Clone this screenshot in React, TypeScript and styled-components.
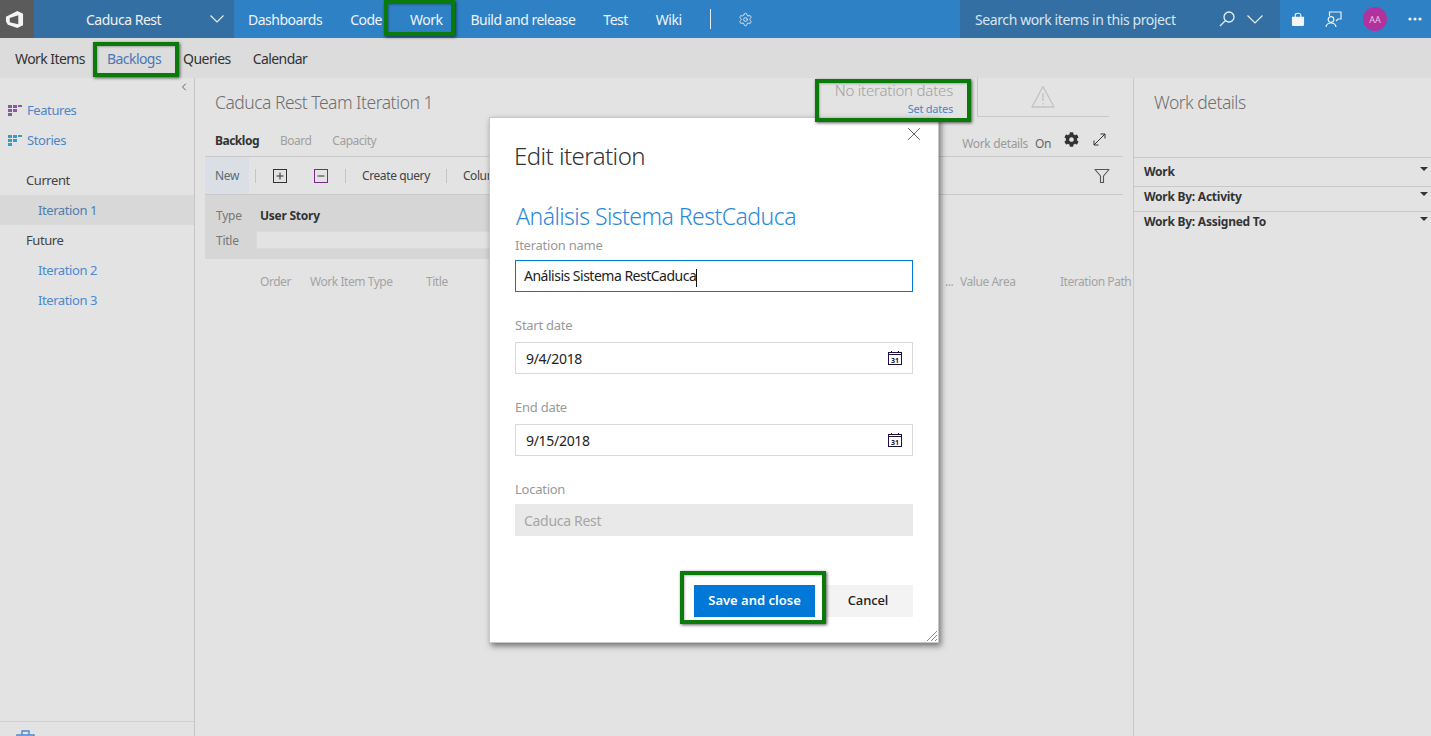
import React from "react";
import styled, { createGlobalStyle } from "styled-components";
import { ChevronLeft, Settings, X } from "lucide-react";
import { FaCog } from "react-icons/fa";

const GlobalStyle = createGlobalStyle`
  html, body {
    margin: 0;
    padding: 0;
    height: 100%;
    overflow: hidden;
    background: #e3e3e3;
    font-family: "Noto Sans", "Open Sans", Arial, sans-serif;
    font-size: 13px;
    letter-spacing: -0.25px;
  }
  * {
    box-sizing: border-box;
  }
`;

const Page = styled.div`
  position: relative;
  width: 1431px;
  height: 736px;
  overflow: hidden;
  display: flex;
  flex-direction: column;
`;

const Marker = styled.div<{ $inset: string }>`
  position: absolute;
  inset: ${(p) => p.$inset};
  border: 4px solid #0a7a0a;
  box-shadow: 1px 1px 3px rgba(0, 0, 0, 0.65), inset 1px 1px 2px rgba(0, 0, 0, 0.25);
  pointer-events: none;
  z-index: 5;
`;

const TopBar = styled.header`
  height: 38px;
  flex: none;
  display: flex;
  align-items: stretch;
  background: #2f81c5;
  color: #fff;
`;

const LogoBox = styled.div`
  width: 34px;
  padding-right: 5px;
  background: #5b5b5b;
  display: flex;
  align-items: center;
  justify-content: center;
`;

const ProjectBox = styled.div`
  width: 200px;
  background: #336fa3;
  display: flex;
  align-items: center;
  justify-content: space-between;
  padding: 0 10px 0 52px;
  font-size: 14px;
  letter-spacing: -0.5px;
  color: #f0f0f0;
`;

const TopNav = styled.nav`
  display: flex;
  align-items: center;
`;

const TopLink = styled.a`
  position: relative;
  height: 100%;
  display: flex;
  align-items: center;
  padding: 0 14px;
  font-size: 14px;
  letter-spacing: -0.5px;
  color: #eef4fa;
`;

const NavDivider = styled.span`
  width: 1px;
  height: 20px;
  background: #e6eff7;
  margin-left: 14px;
`;

const GearSlot = styled.span`
  display: flex;
  margin-left: 27px;
  color: #e6eff7;
`;

const SearchBox = styled.div`
  margin-left: auto;
  width: 320px;
  background: #336fa3;
  display: flex;
  align-items: center;
  padding: 0 17px 0 15px;
  font-size: 14px;
  letter-spacing: -0.4px;
  color: #d9e5ef;
`;

const SearchText = styled.span`
  flex: 1;
`;

const SearchIcons = styled.span`
  display: flex;
  align-items: center;
  gap: 12px;
`;

const TopActions = styled.div`
  width: 151px;
  display: flex;
  align-items: center;
  padding-left: 11px;
  position: relative;
`;

const ActionSlot = styled.span<{ $width: number; $left?: number }>`
  display: flex;
  justify-content: center;
  align-items: center;
  width: ${(p) => p.$width}px;
  margin-left: ${(p) => p.$left ?? 0}px;
`;

const Avatar = styled.span`
  width: 24px;
  height: 24px;
  border-radius: 50%;
  background: #b1329f;
  color: #e8c4e2;
  font-size: 9px;
  display: flex;
  align-items: center;
  justify-content: center;
  letter-spacing: 0;
`;

const SubBar = styled.div`
  height: 40px;
  flex: none;
  display: flex;
  align-items: stretch;
  padding-left: 4px;
  background: #dcdcdc;
`;

const SubLink = styled.a<{ $active?: boolean }>`
  position: relative;
  display: flex;
  align-items: center;
  padding: 1px 11px 0;
  font-size: 14px;
  letter-spacing: -0.56px;
  color: ${(p) => (p.$active ? "#4a78b5" : "#333")};
`;

const Body = styled.div`
  flex: 1;
  display: flex;
  min-height: 0;
`;

const Sidebar = styled.aside`
  position: relative;
  width: 195px;
  flex: none;
  border-right: 1px solid #c6c6c6;
  display: flex;
  flex-direction: column;
  padding-top: 17px;
`;

const CollapseSlot = styled.span`
  position: absolute;
  top: 3px;
  right: 4px;
  display: flex;
  color: #666;
`;

const SideRow = styled.div<{ $indent: number; $color: string; $selected?: boolean }>`
  height: 30px;
  flex: none;
  display: flex;
  align-items: center;
  gap: 4px;
  padding-left: ${(p) => p.$indent}px;
  color: ${(p) => p.$color};
  font-size: 13px;
  letter-spacing: -0.42px;
  background: ${(p) => (p.$selected ? "#d8d8d8" : "transparent")};
`;

const SideGap = styled.div`
  height: 10px;
  flex: none;
`;

const SideFooter = styled.div`
  margin-top: auto;
  height: 15px;
  border-top: 1px solid #d0d0d0;
  padding: 8px 0 0 16px;
  overflow: hidden;
  color: #4a8ad0;
`;

const Main = styled.main`
  width: 938px;
  flex: none;
  padding-left: 10px;
  display: flex;
  flex-direction: column;
  overflow: hidden;
`;

const TitleRow = styled.div`
  height: 39px;
  flex: none;
  display: flex;
  align-items: flex-start;
  padding: 0 24px 0 10px;
`;

const IterationTitle = styled.h1`
  flex: 1;
  margin: 12px 0 0;
  font-size: 17.5px;
  line-height: 24px;
  font-weight: 300;
  letter-spacing: -0.5px;
  color: #6f6f6f;
`;

const DatesBlock = styled.div`
  position: relative;
  display: flex;
  flex-direction: column;
  align-items: flex-end;
  padding: 2px 24px 0 0;
`;

const NoDates = styled.div`
  font-size: 15px;
  line-height: 20px;
  font-weight: 300;
  letter-spacing: -0.2px;
  color: #a2a2a2;
`;

const SetDates = styled.a`
  font-size: 11px;
  line-height: 17px;
  color: #4a86c8;
`;

const WarnBlock = styled.div`
  width: 132px;
  height: 39px;
  border-left: 1px solid #c9c9c9;
  border-bottom: 1px solid #c9c9c9;
  display: flex;
  justify-content: center;
  padding: 7px 2px 0 0;
`;

const TabRow = styled.div`
  height: 40px;
  flex: none;
  display: flex;
  align-items: center;
  margin-right: 10px;
  padding: 8px 17px 0 10px;
  border-bottom: 1px solid #c9c9c9;
`;

const Tab = styled.span<{ $active?: boolean }>`
  font-size: 12px;
  margin-right: 21px;
  letter-spacing: -0.5px;
  font-weight: ${(p) => (p.$active ? 700 : 400)};
  color: ${(p) => (p.$active ? "#333" : "#a0a0a0")};
`;

const WorkToggle = styled.div`
  margin-left: auto;
  display: flex;
  align-items: center;
  padding-top: 6px;
  font-size: 12px;
  letter-spacing: -0.35px;
  color: #9a9a9a;
`;

const ToggleValue = styled.span`
  margin-left: 7px;
  color: #666;
`;

const ToggleIcon = styled.span<{ $gap: number }>`
  display: flex;
  margin-left: ${(p) => p.$gap}px;
  margin-top: -9px;
  color: #333;
`;

const Toolbar = styled.div`
  height: 38px;
  flex: none;
  display: flex;
  align-items: stretch;
  margin-right: 10px;
  padding-right: 13px;
  border-bottom: 1px solid #c9c9c9;
  font-size: 12px;
  letter-spacing: -0.4px;
  color: #444;
`;

const NewButton = styled.span`
  width: 44px;
  background: #d9dfe4;
  color: #5f6a75;
  display: flex;
  align-items: center;
  justify-content: center;
`;

const ToolSep = styled.span<{ $left: number }>`
  align-self: center;
  width: 1px;
  height: 14px;
  background: #c4c4c4;
  margin-left: ${(p) => p.$left}px;
`;

const ToolItem = styled.span<{ $left: number }>`
  display: flex;
  align-items: center;
  margin-left: ${(p) => p.$left}px;
`;

const ClippedTool = styled(ToolItem)`
  width: 27px;
  overflow: hidden;
  white-space: nowrap;
`;

const FilterSlot = styled.span`
  display: flex;
  align-items: center;
  margin-left: auto;
`;

const QuickAdd = styled.div`
  height: 64px;
  width: 500px;
  flex: none;
  background: #d6d6d6;
  display: grid;
  grid-template-columns: 40px 1fr;
  grid-auto-rows: 18px;
  align-items: center;
  row-gap: 7px;
  padding: 11px 0 0 11px;
  font-size: 12px;
  color: #777;
`;

const QuickValue = styled.span`
  padding-left: 4px;
  font-weight: 700;
  color: #333;
`;

const QuickInput = styled.div`
  height: 18px;
  background: #e3e3e3;
  border: 1px solid #dadada;
`;

const ColumnHeader = styled.div`
  display: grid;
  grid-template-columns: 50px 116px 519px 15px 100px 80px;
  padding: 14px 0 0 55px;
  font-size: 12px;
  line-height: 18px;
  letter-spacing: -0.45px;
  white-space: nowrap;
  color: #a3a3a3;
`;

const DetailsPane = styled.aside`
  flex: 1;
  border-left: 1px solid #c9c9c9;
`;

const DetailsTitle = styled.h2`
  height: 79px;
  margin: 0;
  padding: 12px 0 0 20px;
  font-size: 17.5px;
  line-height: 24px;
  font-weight: 300;
  letter-spacing: -0.5px;
  color: #6f6f6f;
`;

const DetailsRow = styled.div<{ $height: number; $pad: number }>`
  height: ${(p) => p.$height}px;
  display: flex;
  align-items: flex-start;
  justify-content: space-between;
  padding: ${(p) => p.$pad}px 3px 0 10px;
  border-top: 1px solid #c9c9c9;
  font-size: 12px;
  line-height: 18px;
  font-weight: 700;
  color: #333;
`;

const Caret = styled.span`
  width: 0;
  height: 0;
  margin-top: 4px;
  border-left: 4px solid transparent;
  border-right: 4px solid transparent;
  border-top: 4px solid #333;
`;

const Dialog = styled.section`
  position: absolute;
  left: 489px;
  top: 117px;
  width: 450px;
  height: 526px;
  background: #fff;
  border: 1px solid #c8c8c8;
  box-shadow: 2px 3px 6px rgba(0, 0, 0, 0.5);
  padding: 0 25px;
  display: flex;
  flex-direction: column;
  z-index: 3;
`;

const CloseSlot = styled.span`
  position: absolute;
  top: 5px;
  right: 13px;
  display: flex;
  color: #444;
`;

const DialogTitle = styled.h2`
  margin: 21px 0 0 -1px;
  font-size: 24px;
  line-height: 34px;
  font-weight: 300;
  letter-spacing: -0.55px;
  color: #333;
`;

const IterationHeading = styled.h3`
  margin: 27px 0 0 1px;
  font-size: 23px;
  line-height: 32px;
  font-weight: 300;
  letter-spacing: -0.53px;
  color: #2b88d8;
`;

const FieldLabel = styled.label`
  display: block;
  font-size: 13px;
  line-height: 18px;
  color: #999;
`;

const Field = styled.div<{ $top: number }>`
  margin-top: ${(p) => p.$top}px;
`;

const InputBox = styled.div<{ $state?: "focus" | "disabled" }>`
  height: 32px;
  margin-top: ${(p) => (p.$state === undefined ? 8 : 6)}px;
  display: flex;
  align-items: center;
  justify-content: space-between;
  padding: ${(p) => (p.$state === "focus" ? "1px 8px 0" : p.$state === "disabled" ? "0 9px" : "0 10px")};
  font-size: 14px;
  letter-spacing: ${(p) => (p.$state === "focus" ? -0.5 : -0.3)}px;
  color: ${(p) => (p.$state === "disabled" ? "#a6a6a6" : "#222")};
  background: ${(p) => (p.$state === "disabled" ? "#e9e9e9" : "#fff")};
  border: ${(p) =>
    p.$state === "focus"
      ? "1px solid #0078d7"
      : p.$state === "disabled"
        ? "none"
        : "1px solid #d9d9d9"};
`;

const TextCaret = styled.span`
  display: inline-block;
  width: 1px;
  height: 18px;
  background: #111;
  vertical-align: middle;
`;

const DialogActions = styled.div`
  margin-top: 49px;
  display: flex;
  justify-content: flex-end;
  gap: 8px;
`;

const ActionButton = styled.button<{ $primary?: boolean }>`
  position: relative;
  height: 32px;
  width: ${(p) => (p.$primary ? 121 : 90)}px;
  border: none;
  padding: 0 0 2px;
  font-family: inherit;
  letter-spacing: ${(p) => (p.$primary ? 0 : -0.1)}px;
  font-size: 13px;
  font-weight: ${(p) => (p.$primary ? 600 : 500)};
  color: ${(p) => (p.$primary ? "#fff" : "#222")};
  background: ${(p) => (p.$primary ? "#0078d7" : "#f3f3f3")};
`;

const ResizeGrip = styled.svg`
  position: absolute;
  right: 0;
  bottom: 0;
`;

const LogoIcon = () => (
  <svg width="19" height="19" viewBox="0 0 20 20" fill="#f4f4f4" fillRule="evenodd">
    <path d="M1 7 L13 1 L19 4 V16 L13 19 L3 15.5 L1 12 Z M5 8.5 V13 L14 15 V5.5 Z" />
  </svg>
);

const Chevron = ({ width, color }: { width: number; color: string }) => (
  <svg width={width} height={width / 2 + 1} viewBox={`0 0 ${width} ${width / 2 + 1}`} fill="none" stroke={color} strokeWidth="1.2">
    <path d={`M0.5 0.5 L${width / 2} ${width / 2} L${width - 0.5} 0.5`} />
  </svg>
);

const SearchGlyph = () => (
  <svg width="16" height="16" viewBox="0 0 16 16" fill="none" stroke="#e8f0f6" strokeWidth="1.3">
    <circle cx="10" cy="6" r="5" />
    <path d="M6.4 9.6 L1 15" />
  </svg>
);

const BagIcon = () => (
  <svg width="15" height="15" viewBox="0 0 15 15" fill="#f4f4f4">
    <path d="M1 4.5 H14 V13 Q14 14.5 12.5 14.5 H2.5 Q1 14.5 1 13 Z" />
    <path d="M4.5 5 V3 Q4.5 .8 7.5 .8 T10.5 3 V5" fill="none" stroke="#f4f4f4" strokeWidth="1.2" />
  </svg>
);

const FeedbackIcon = () => (
  <svg width="17" height="17" viewBox="0 0 17 17" fill="none" stroke="#f0f0f0" strokeWidth="1.2">
    <path d="M4.5 5 V1 H16 V8 H13 L11 10" />
    <circle cx="6" cy="8.5" r="2.8" />
    <path d="M1 16 Q1.5 12 6 12 T11 16" />
  </svg>
);

const DotsIcon = () => (
  <svg width="14" height="4" viewBox="0 0 14 4" fill="#eef4fa">
    <circle cx="2" cy="2" r="1.6" />
    <circle cx="7" cy="2" r="1.6" />
    <circle cx="12" cy="2" r="1.6" />
  </svg>
);

const BacklogIcon = ({ color }: { color: string }) => (
  <svg width="15" height="11" viewBox="0 0 15 11" fill={color}>
    <rect x="0" y="0" width="4" height="3" />
    <rect x="5" y="0" width="4" height="3" />
    <rect x="10" y="0" width="4" height="2" />
    <rect x="0" y="4" width="4" height="3" />
    <rect x="5" y="4" width="4" height="3" />
    <rect x="0" y="8" width="4" height="3" />
  </svg>
);

const WarningIcon = () => (
  <svg width="24" height="23" viewBox="0 0 24 23" fill="none" stroke="#c4c4c4" strokeWidth="1.4">
    <path d="M12 1.5 L23 22 H1 Z" strokeLinejoin="round" />
    <path d="M12 8 V16 M12 18 V19.5" />
  </svg>
);

const ExpandIcon = () => (
  <svg width="13" height="13" viewBox="0 0 13 13" fill="none" stroke="#333" strokeWidth="1">
    <path d="M1 12 L12 1 M7.5 1 H12 V5.5 M1 7.5 V12 H5.5" />
  </svg>
);

const FunnelIcon = () => (
  <svg width="16" height="16" viewBox="0 0 16 16" fill="none" stroke="#555" strokeWidth="1.1">
    <path d="M1 1.5 H15 L9.5 8 V14.5 H6.5 V8 Z" strokeLinejoin="round" />
  </svg>
);

const BoxIcon = ({ color, plus }: { color: string; plus?: boolean }) => (
  <svg width="14" height="14" viewBox="0 0 14 14" fill="none" stroke={color}>
    <rect x="0.5" y="0.5" width="13" height="13" />
    <path d="M3.5 7 H10.5" stroke="#333" />
    {plus && <path d="M7 3.5 V10.5" stroke="#333" />}
  </svg>
);

const CalendarIcon = () => (
  <svg width="14" height="14" viewBox="0 0 14 14" fill="none" stroke="#1c1040">
    <rect x="0.5" y="1.5" width="13" height="12" />
    <path d="M0.5 3.5 H13.5 M3.5 0 V2 M10.5 0 V2" />
    <text x="7" y="11.5" textAnchor="middle" fontSize="7" fontWeight="700" fill="#1c1040" stroke="none" letterSpacing="0">
      31
    </text>
  </svg>
);

const ToolboxIcon = () => (
  <svg width="19" height="16" viewBox="0 0 19 16" fill="none" stroke="currentColor" strokeWidth="1.4">
    <path d="M1 5 H18 V15 H1 Z M6 5 V1 H13 V5" />
  </svg>
);

const GripIcon = () => (
  <ResizeGrip width="12" height="12" viewBox="0 0 12 12" stroke="#8a8a8a">
    <path d="M1 11 L11 1 M5 11 L11 5 M9 11 L11 9" />
  </ResizeGrip>
);

const topLinks = ["Dashboards", "Code", "Work", "Build and release", "Test", "Wiki"];
const subLinks = ["Work Items", "Backlogs", "Queries", "Calendar"];
const columns = ["Order", "Work Item Type", "Title", "...", "Value Area", "Iteration Path"];
const details = [
  { label: "Work", height: 29, pad: 5 },
  { label: "Work By: Activity", height: 25, pad: 1 },
  { label: "Work By: Assigned To", height: 25, pad: 1 },
];

const App: React.FunctionComponent = () => {
  return (
    <Page>
      <GlobalStyle />
      <TopBar>
        <LogoBox>
          <LogoIcon />
        </LogoBox>
        <ProjectBox>
          Caduca Rest
          <Chevron width={14} color="#f0f0f0" />
        </ProjectBox>
        <TopNav>
          {topLinks.map((link) => (
            <TopLink key={link}>
              {link}
              {link === "Work" && <Marker $inset="0 1px 2px -12px" />}
            </TopLink>
          ))}
          <NavDivider />
          <GearSlot>
            <Settings size={15} strokeWidth={1.4} />
          </GearSlot>
        </TopNav>
        <SearchBox>
          <SearchText>Search work items in this project</SearchText>
          <SearchIcons>
            <SearchGlyph />
            <Chevron width={16} color="#e8f0f6" />
          </SearchIcons>
        </SearchBox>
        <TopActions>
          <ActionSlot $width={14}>
            <BagIcon />
          </ActionSlot>
          <ActionSlot $width={56}>
            <FeedbackIcon />
          </ActionSlot>
          <ActionSlot $width={28}>
            <Avatar>AA</Avatar>
          </ActionSlot>
          <ActionSlot $width={14} $left={19}>
            <DotsIcon />
          </ActionSlot>
        </TopActions>
      </TopBar>
      <SubBar>
        {subLinks.map((link) => (
          <SubLink key={link} $active={link === "Backlogs"}>
            {link}
            {link === "Backlogs" && <Marker $inset="4px -7px 1px -3px" />}
          </SubLink>
        ))}
      </SubBar>
      <Body>
        <Sidebar>
          <CollapseSlot>
            <ChevronLeft size={12} strokeWidth={2} />
          </CollapseSlot>
          <SideRow $indent={8} $color="#4f85c4">
            <BacklogIcon color="#8a5a9e" />
            Features
          </SideRow>
          <SideRow $indent={8} $color="#4f85c4">
            <BacklogIcon color="#3a9cc0" />
            Stories
          </SideRow>
          <SideGap />
          <SideRow $indent={26} $color="#444">
            Current
          </SideRow>
          <SideRow $indent={38} $color="#4f7fae" $selected>
            Iteration 1
          </SideRow>
          <SideRow $indent={26} $color="#444">
            Future
          </SideRow>
          <SideRow $indent={38} $color="#4a8ad0">
            Iteration 2
          </SideRow>
          <SideRow $indent={38} $color="#4a8ad0">
            Iteration 3
          </SideRow>
          <SideFooter>
            <ToolboxIcon />
          </SideFooter>
        </Sidebar>
        <Main>
          <TitleRow>
            <IterationTitle>Caduca Rest Team Iteration 1</IterationTitle>
            <DatesBlock>
              <NoDates>No iteration dates</NoDates>
              <SetDates>Set dates</SetDates>
              <Marker $inset="1px 6px -5px -20px" />
            </DatesBlock>
            <WarnBlock>
              <WarningIcon />
            </WarnBlock>
          </TitleRow>
          <TabRow>
            <Tab $active>Backlog</Tab>
            <Tab>Board</Tab>
            <Tab>Capacity</Tab>
            <WorkToggle>
              Work details
              <ToggleValue>On</ToggleValue>
              <ToggleIcon $gap={13}>
                <FaCog size={15} />
              </ToggleIcon>
              <ToggleIcon $gap={14}>
                <ExpandIcon />
              </ToggleIcon>
            </WorkToggle>
          </TabRow>
          <Toolbar>
            <NewButton>New</NewButton>
            <ToolSep $left={6} />
            <ToolItem $left={17}>
              <BoxIcon color="#333" plus />
            </ToolItem>
            <ToolItem $left={27}>
              <BoxIcon color="#7a2a8a" />
            </ToolItem>
            <ToolSep $left={17} />
            <ToolItem $left={16}>Create query</ToolItem>
            <ToolSep $left={16} />
            <ClippedTool $left={16}>Column options</ClippedTool>
            <FilterSlot>
              <FunnelIcon />
            </FilterSlot>
          </Toolbar>
          <QuickAdd>
            <span>Type</span>
            <QuickValue>User Story</QuickValue>
            <span>Title</span>
            <QuickInput />
          </QuickAdd>
          <ColumnHeader>
            {columns.map((column) => (
              <span key={column}>{column}</span>
            ))}
          </ColumnHeader>
        </Main>
        <DetailsPane>
          <DetailsTitle>Work details</DetailsTitle>
          {details.map((row) => (
            <DetailsRow key={row.label} $height={row.height} $pad={row.pad}>
              {row.label}
              <Caret />
            </DetailsRow>
          ))}
        </DetailsPane>
      </Body>
      <Dialog>
        <CloseSlot>
          <X size={22} strokeWidth={0.9} />
        </CloseSlot>
        <DialogTitle>Edit iteration</DialogTitle>
        <IterationHeading>Análisis Sistema RestCaduca</IterationHeading>
        <Field $top={4}>
          <FieldLabel>Iteration name</FieldLabel>
          <InputBox $state="focus">
            <span>
              Análisis Sistema RestCaduca
              <TextCaret />
            </span>
          </InputBox>
        </Field>
        <Field $top={24}>
          <FieldLabel>Start date</FieldLabel>
          <InputBox>
            9/4/2018
            <CalendarIcon />
          </InputBox>
        </Field>
        <Field $top={24}>
          <FieldLabel>End date</FieldLabel>
          <InputBox>
            9/15/2018
            <CalendarIcon />
          </InputBox>
        </Field>
        <Field $top={24}>
          <FieldLabel>Location</FieldLabel>
          <InputBox $state="disabled">Caduca Rest</InputBox>
        </Field>
        <DialogActions>
          <ActionButton $primary>
            Save and close
            <Marker $inset="-14px -11px -7px -14px" />
          </ActionButton>
          <ActionButton>Cancel</ActionButton>
        </DialogActions>
        <GripIcon />
      </Dialog>
    </Page>
  );
};

export default App;
